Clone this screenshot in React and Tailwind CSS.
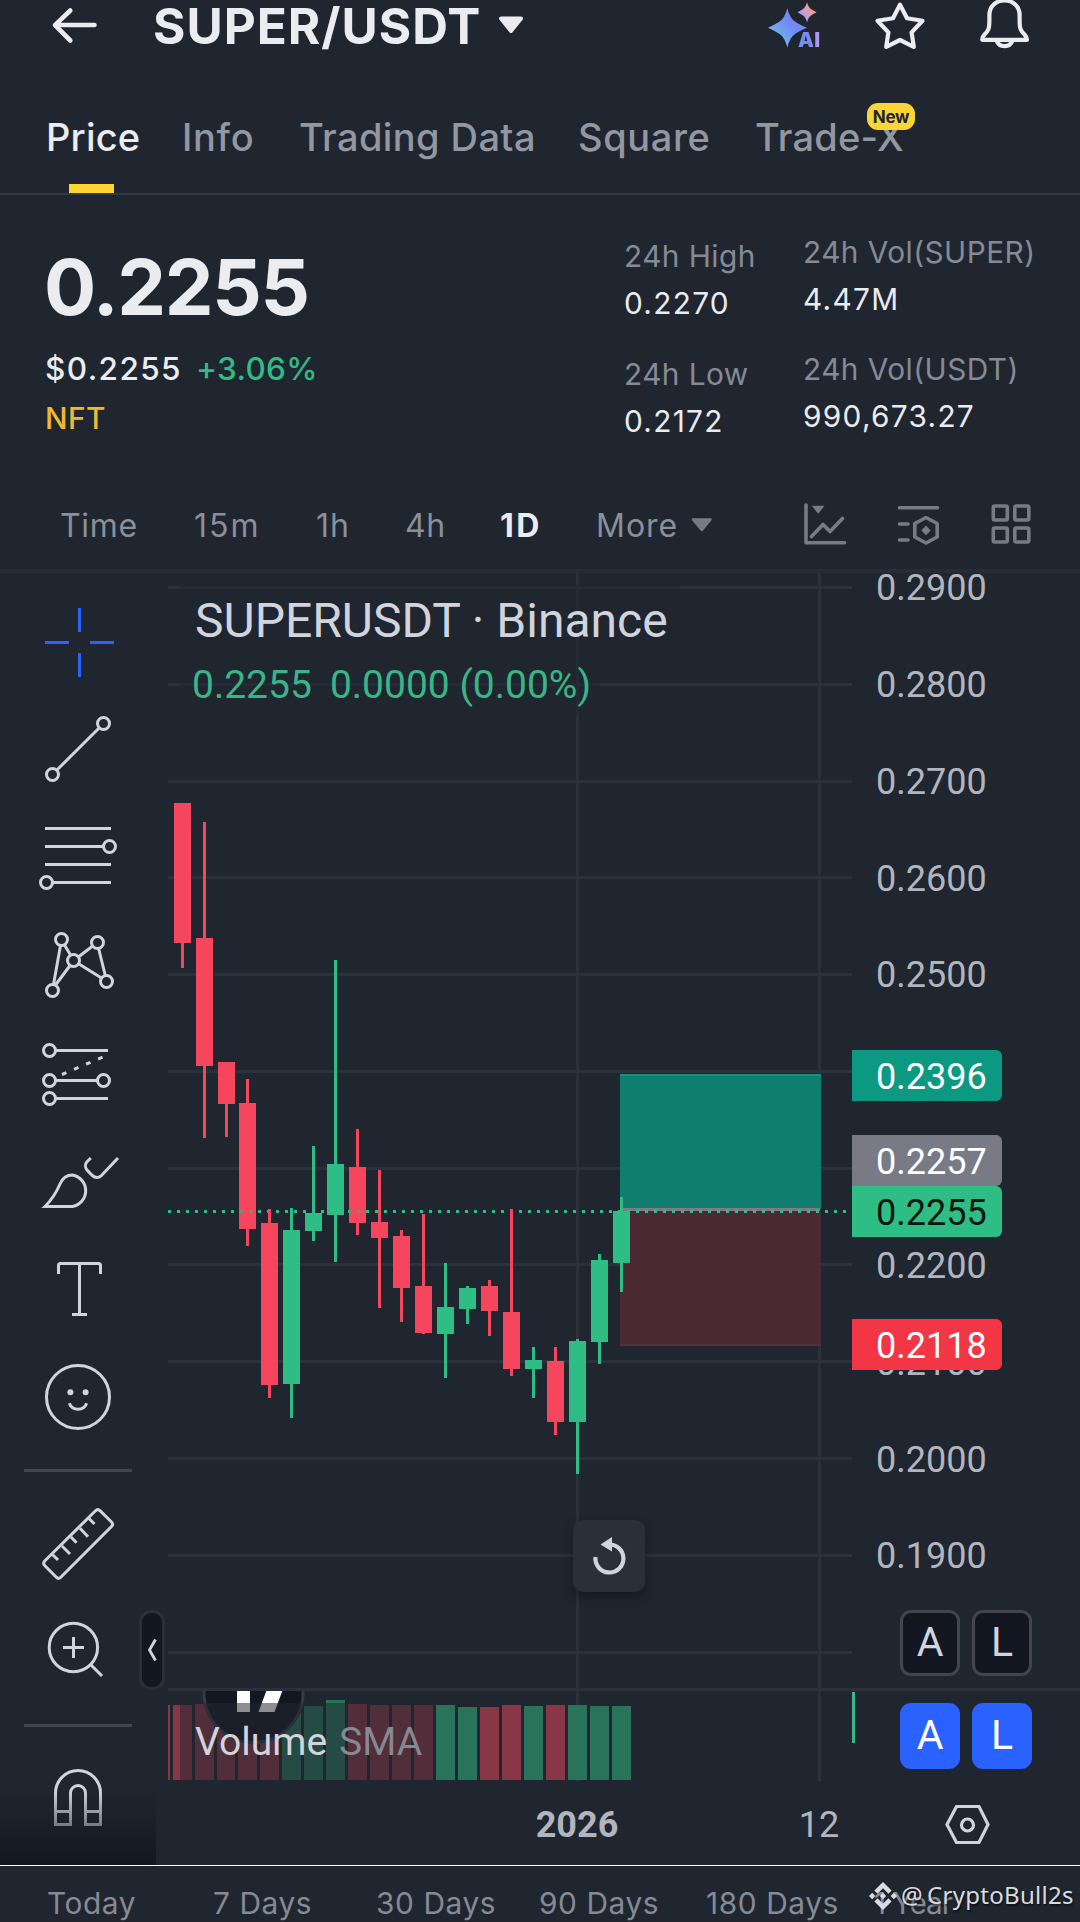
import React from 'react';
import { SiBinance } from 'react-icons/si';

const UP = '#2ebd85';
const DOWN = '#f6465d';

/* [centre x, high, body top, body bottom, low, rising] */
const CANDLES = [
  [182.5, 803, 803, 943, 968, 0],
  [204.5, 822, 938, 1066, 1138, 0],
  [226.5, 1062, 1062, 1104, 1137, 0],
  [247.5, 1079, 1103, 1229, 1246, 0],
  [269.5, 1209, 1223, 1385, 1398, 0],
  [291.5, 1208, 1230, 1384, 1418, 1],
  [313.5, 1146, 1213, 1231, 1241, 1],
  [335.5, 960, 1164, 1215, 1262, 1],
  [357.5, 1129, 1167, 1223, 1235, 0],
  [379.5, 1170, 1222, 1238, 1308, 0],
  [401.5, 1230, 1236, 1288, 1322, 0],
  [423.5, 1214, 1286, 1333, 1334, 0],
  [445.5, 1263, 1307, 1334, 1378, 1],
  [467.5, 1286, 1288, 1309, 1324, 1],
  [489.5, 1280, 1286, 1311, 1336, 0],
  [511.5, 1209, 1312, 1369, 1376, 0],
  [533.5, 1347, 1360, 1369, 1398, 1],
  [555.5, 1347, 1361, 1422, 1435, 0],
  [577.5, 1339, 1341, 1422, 1474, 1],
  [599.5, 1254, 1260, 1342, 1364, 1],
  [621.5, 1197, 1211, 1263, 1292, 1],
];

/* [left, top, width, rising] */
const VOLUMES = [
  [168, 1705, 2, 0],
  [173, 1705, 19, 0],
  [195, 1704, 19, 0],
  [217, 1705, 18, 0],
  [238, 1705, 19, 0],
  [260, 1705, 19, 0],
  [282, 1705, 19, 1],
  [304, 1706, 19, 1],
  [326, 1700, 19, 1],
  [348, 1704, 19, 0],
  [370, 1705, 19, 0],
  [392, 1705, 19, 0],
  [414, 1705, 19, 0],
  [436, 1705, 19, 1],
  [458, 1707, 19, 1],
  [480, 1707, 19, 0],
  [502, 1705, 19, 0],
  [524, 1706, 19, 1],
  [546, 1705, 19, 0],
  [568, 1705, 19, 1],
  [590, 1706, 19, 1],
  [612, 1706, 19, 1],
];

const GRID_Y = [587.5, 684.5, 781.5, 877.5, 974.5, 1071.5, 1168.5, 1264.5, 1361.5, 1458.5, 1555.5, 1652.5];
const PRICES = ['0.2900', '0.2800', '0.2700', '0.2600', '0.2500', '0.2400', '0.2300', '0.2200', '0.2100', '0.2000', '0.1900'];

function Header() {
  return (
    <header className="flex h-[52px] w-full shrink-0 items-center text-[#eaecf0]">
      <svg className="ml-[48px] h-[52px] w-[54px] shrink-0" viewBox="48 0 54 52" fill="none" stroke="#eaecf0" strokeWidth="4.6" strokeLinecap="round" strokeLinejoin="round">
        <path d="M70.3 10.5L55 25.2L70.3 40.5M56 25H94.5" />
      </svg>
      <h1 className="ml-[51px] w-[335px] shrink-0 whitespace-nowrap text-[49.5px] font-bold leading-[52px] tracking-[1px]">SUPER/USDT</h1>
      <svg className="ml-[8px] h-[52px] w-[32px] shrink-0" viewBox="496 0 32 52">
        <path d="M501 18.5H521L511 31Z" fill="#eaecf0" stroke="#eaecf0" strokeWidth="4" strokeLinejoin="round" />
      </svg>
      <div className="relative ml-[238px] h-[52px] w-[64px] shrink-0">
        <svg className="h-[52px] w-[64px]" viewBox="766 0 64 52">
          <defs>
            <linearGradient id="sparkBig" x1="0" y1="1" x2="1" y2="0">
              <stop offset="0.2" stopColor="#6fb6f0" />
              <stop offset="0.6" stopColor="#7189f2" />
              <stop offset="1" stopColor="#7a86f5" />
            </linearGradient>
            <linearGradient id="sparkSmall" x1="0" y1="1" x2="1" y2="0">
              <stop offset="0.2" stopColor="#a79af0" />
              <stop offset="0.5" stopColor="#cf9fce" />
              <stop offset="0.7" stopColor="#f59a80" />
            </linearGradient>
          </defs>
          <path d="M787.3 8.3Q790 18.5 795 21.5Q799 24.5 807 27.8Q799 31 795 34Q790 37 787.3 47.5Q784.6 37 779.6 34Q775 31 768 27.8Q775 24.5 779.6 21.5Q784.6 18.5 787.3 8.3Z" fill="url(#sparkBig)" />
          <path d="M807 2.3Q808.5 7.5 811 9Q813 10.6 816.6 12.3Q813 14 811 15.6Q808.5 17 807 22.4Q805.5 17 803 15.6Q801 14 797.5 12.3Q801 10.6 803 9Q805.5 7.5 807 2.3Z" fill="url(#sparkSmall)" />
        </svg>
        <span className="absolute left-[32px] top-[28px] bg-linear-to-r from-[#6f97f2] via-[#7a86f3] to-[#b9a0ec] bg-clip-text text-[20px] font-black leading-[24px] tracking-[0.3px] text-transparent">AI</span>
      </div>
      <svg className="ml-[43px] h-[52px] w-[56px] shrink-0" viewBox="873 0 56 52" fill="none" stroke="#eaecf0" strokeWidth="4.2" strokeLinejoin="round">
        <path d="M900 4.6L907 18.3L922.5 20.8L911.6 32.4L913.8 46.8L900 40L886.2 46.8L888.4 32.4L877.5 20.8L893 18.3Z" />
      </svg>
      <svg className="ml-[48px] h-[53px] w-[56px] shrink-0" viewBox="977 0 56 53" fill="none" stroke="#eaecf0" strokeWidth="4.2" strokeLinejoin="round">
        <path d="M1004.500 0.500C996 .5 989.400 6.500 989.400 15V20C989.400 29 988.500 30.500 984.500 34.500C982.500 36.500 982.200 37.500 982.200 39.800H1027C1027 37.500 1026.500 36.500 1024.500 34.500C1020.500 30.500 1019.600 29 1019.600 20V15C1019.600 6.500 1013 .5 1004.500 .5ZM996.500 40.500A8.500 8.500 0 0 0 1012.500 40.500" />
      </svg>
    </header>
  );
}

function Tabs() {
  return (
    <nav className="relative flex h-[143px] w-full shrink-0 whitespace-nowrap border-b-2 border-[#333a44] pl-[46px] pt-[60px] text-[38px] font-medium leading-[50px] text-[#9297a2]">
      <div className="w-[136px] tracking-[0.2px] text-[#eaecf0]">Price</div>
      <div className="w-[117px] tracking-[0.7px]">Info</div>
      <div className="w-[279px] tracking-[0.4px]">Trading Data</div>
      <div className="w-[177px] tracking-[0.6px]">Square</div>
      <div className="relative tracking-[0.2px]">
        Trade-X
        <span className="absolute left-[112px] top-[-9px] h-[27px] w-[48px] rounded-[11px] bg-[#fcd535] text-center text-[17px] font-bold leading-[28px] tracking-[-0.3px] text-[#202630]">New</span>
      </div>
      <span className="absolute bottom-0 left-[69px] h-[9px] w-[45px] bg-[#fcd535]" />
    </nav>
  );
}

function Stat({ label, value }) {
  return (
    <div className="whitespace-nowrap text-[29.8px] leading-[46.500px]">
      <div className="tracking-[0.450px] text-[#858a95]">{label}</div>
      <div className="tracking-[1.3px] text-[#eaecf0]">{value}</div>
    </div>
  );
}

function Summary() {
  return (
    <section className="flex h-[286px] w-full shrink-0">
      <div className="w-[580px] pl-[44px] pt-[52px]">
        <div className="text-[77.5px] font-bold leading-[80px] tracking-[-1.300px] text-[#eaecf0]">0.2255</div>
        <div className="mt-[22px] flex text-[31.500px] leading-[40px]">
          <span className="w-[152px] pl-px font-medium tracking-[1.4px] text-[#eaecf0]">$0.2255</span>
          <span className="font-medium tracking-[0.3px] text-[#2ebd85]">+3.06%</span>
        </div>
        <div className="mt-[9px] pl-px text-[29.8px] font-medium leading-[40px] tracking-[0.500px] text-[#f0b92b]">NFT</div>
      </div>
      <div className="flex w-[180px] flex-col gap-[25px] pl-[44px] pt-[38px]">
        <Stat label="24h High" value="0.2270" />
        <Stat label="24h Low" value="0.2172" />
      </div>
      <div className="flex flex-col gap-[24px] pl-[43px] pt-[34px]">
        <Stat label="24h Vol(SUPER)" value="4.47M" />
        <Stat label="24h Vol(USDT)" value="990,673.27" />
      </div>
    </section>
  );
}

function Intervals() {
  return (
    <div className="flex h-[92px] w-full shrink-0 items-center whitespace-nowrap border-b-4 border-[#272d37] pl-[60px] text-[32px] leading-[40px] text-[#8a8f9a]">
      <div className="w-[134px] pt-[2px] tracking-[0.7px]">Time</div>
      <div className="w-[122px] pt-[2px] tracking-[2px]">15m</div>
      <div className="w-[89px] pt-[2px] tracking-[1px]">1h</div>
      <div className="w-[95px] pt-[2px] tracking-[0.500px]">4h</div>
      <div className="w-[96px] pt-[2px] font-bold tracking-[2.500px] text-[#eaecf0]">1D</div>
      <div className="w-[92px] pt-[2px] tracking-[1px]">More</div>
      <svg className="h-[24px] w-[28px]" viewBox="688 512 28 24">
        <path d="M693 518.500H710.500L701.800 529Z" fill="#767b86" stroke="#767b86" strokeWidth="2.500" strokeLinejoin="round" />
      </svg>
      <svg className="ml-[84px] h-[48px] w-[50px]" viewBox="800 501 50 48" fill="none" stroke="#767b86" strokeWidth="3.600" strokeLinecap="round" strokeLinejoin="round">
        <path d="M806 505V542.800H844.500M811.500 536.500L823 524.500L830 531.500L842.500 518.500" />
        <path d="M811.700 505.700H824.500L818.200 513.700Z" fill="#767b86" stroke="none" />
      </svg>
      <svg className="ml-[43px] h-[48px] w-[50px]" viewBox="893 501 50 48" fill="none" stroke="#767b86" strokeWidth="3.600" strokeLinecap="round" strokeLinejoin="round">
        <path d="M899.500 507.700H937.500M899.500 524H908M899.500 540H908M926 517.500L937.200 523.500V537L926 543L914.800 537V523.500Z" />
        <path d="M926 525.500L930.700 530.400L926 535.300L921.300 530.400Z" fill="#767b86" stroke="none" />
      </svg>
      <svg className="ml-[43px] h-[48px] w-[50px]" viewBox="986 501 50 48" fill="none" stroke="#767b86" strokeWidth="3.600">
        <rect x="993.300" y="506" width="14" height="14" rx="1.500" />
        <rect x="1014.800" y="506" width="14" height="14" rx="1.500" />
        <rect x="993.300" y="528" width="14" height="14" rx="1.500" />
        <rect x="1014.800" y="528" width="14" height="14" rx="1.500" />
      </svg>
    </div>
  );
}

function Tool({ top, className, color = '#d1d4dc', height, children }) {
  return (
    <svg className={className} viewBox={`0 ${top} 156 ${height}`} fill="none" stroke={color} strokeWidth="3">
      {children}
    </svg>
  );
}

function ToolRail() {
  return (
    <aside className="relative flex h-full w-[168px] shrink-0 flex-col">
      <Tool top={573} height={123} className="h-[123px] w-[156px] shrink-0" color="#2962ff">
        <path d="M79.500 608V632M79.500 653V677M45 642.500H69M90 642.500H114" />
      </Tool>
      <Tool top={696} height={107} className="h-[107px] w-[156px] shrink-0">
        <circle cx="103.500" cy="723.500" r="6" />
        <circle cx="52.500" cy="774.500" r="6" />
        <path d="M56.700 770.300L99.300 727.700" />
      </Tool>
      <Tool top={803} height={108} className="h-[108px] w-[156px] shrink-0">
        <path d="M45 828.500H111M45 846.500H103.500M45 864.500H111M52.500 882.500H111" />
        <circle cx="109.500" cy="846.500" r="6" />
        <circle cx="46.500" cy="882.500" r="6" />
      </Tool>
      <Tool top={911} height={109} className="h-[109px] w-[156px] shrink-0">
        <circle cx="61.500" cy="939.500" r="6" />
        <circle cx="97.500" cy="942.500" r="6" />
        <circle cx="73.500" cy="960.500" r="6" />
        <circle cx="106.500" cy="981.500" r="6" />
        <circle cx="52.500" cy="990.500" r="6" />
        <path d="M60.500 945.500L53.500 984.500M64.500 945L70.500 955M70 965.500L55.500 985M78.300 957L92.700 946M98.600 948.500L105.300 975.500M78.600 963.800L101.500 978" />
      </Tool>
      <Tool top={1020} height={109} className="h-[109px] w-[156px] shrink-0">
        <circle cx="49.500" cy="1050.500" r="6" />
        <circle cx="49.500" cy="1080.500" r="6" />
        <circle cx="103.500" cy="1080.500" r="6" />
        <circle cx="49.500" cy="1098.500" r="6" />
        <path d="M55.500 1050.500H108M55.500 1080.500H97.500M55.500 1098.500H108" />
        <path d="M62 1074.500L104 1056.500" strokeDasharray="4.800 8.300" />
      </Tool>
      <Tool top={1129} height={107} className="h-[107px] w-[156px] shrink-0">
        <path d="M45 1206.500C53 1198.500 57 1191 60 1184C62.500 1178 67 1175 72.500 1175A16 16 0 0 1 72.500 1206.500Z" />
        <path d="M90.800 1158L87 1161.800C85 1164 85 1167.500 86.800 1169.700C88.500 1171.700 91 1174.200 92.500 1175.600C95 1178.200 98.700 1178.200 101.200 1175.700L118 1158" />
      </Tool>
      <Tool top={1236} height={107} className="h-[107px] w-[156px] shrink-0">
        <path d="M58.500 1274V1265.500Q58.500 1263.500 60.500 1263.500H98.500Q100.500 1263.500 100.500 1265.500V1274M79.500 1263.500V1314.500M72 1314.500H87" />
      </Tool>
      <Tool top={1343} height={108} className="h-[108px] w-[156px] shrink-0">
        <circle cx="78" cy="1397" r="31.500" />
        <circle cx="70.400" cy="1392.300" r="3" fill="#d1d4dc" stroke="none" />
        <circle cx="85.600" cy="1392.300" r="3" fill="#d1d4dc" stroke="none" />
        <path d="M69.300 1403.300A9.300 9.300 0 0 0 86.700 1403.300" />
      </Tool>
      <div className="mb-[18px] ml-[24px] mt-[18px] h-[3px] w-[108px] shrink-0 bg-[#434651]" />
      <Tool top={1490} height={108} className="h-[108px] w-[156px] shrink-0">
        <path d="M95.500 1510.700Q97.700 1508.500 100 1510.700L111.500 1522Q113.700 1524.300 111.500 1526.500L60.500 1577.500Q58.500 1579.300 56.300 1577.200L44.700 1565.500Q42.600 1563.300 44.700 1561Z" strokeLinejoin="round" />
        <path d="M52.700 1554.700L58 1560M62 1546L70 1554M71 1537L76.500 1542.700M80 1528.300L88 1536.700M89 1518.500L94.500 1524" />
      </Tool>
      <Tool top={1598} height={100} className="h-[100px] w-[156px] shrink-0">
        <circle cx="73.400" cy="1647.500" r="24.200" />
        <path d="M63 1647.500H84M73.500 1637V1658M90.800 1664.800L102 1676" />
      </Tool>
      <div className="mb-[13px] ml-[24px] mt-[26px] h-[3px] w-[108px] shrink-0 bg-[#434651]" />
      <Tool top={1740} height={125} className="h-[125px] w-[156px] shrink-0">
        <path d="M55.500 1824.500V1793A22.500 22.500 0 0 1 100.500 1793V1824.500H85.500V1793A7.500 7.500 0 0 0 70.500 1793V1824.500ZM55.500 1811.500H70.500M85.500 1811.500H100.500" />
      </Tool>
      <div className="absolute bottom-0 left-0 h-[75px] w-[156px] bg-linear-to-b from-transparent to-[#131722]" />
      <div className="absolute left-[139px] top-[1037px] flex h-[80px] w-[26px] items-center justify-center rounded-[12px] border-[3px] border-[#2a2f39] bg-[#131722]">
        <svg className="mr-px h-[24px] w-[12px]" viewBox="0 0 12 24" fill="none" stroke="#d1d4dc" strokeWidth="2.800">
          <path d="M9.500 1.500L3.500 12L9.500 22.500" />
        </svg>
      </div>
    </aside>
  );
}

function Plot() {
  return (
    <div className="relative h-full w-[684px] shrink-0">
      <svg className="h-[1292px] w-[684px]" viewBox="168 573 684 1292" shapeRendering="crispEdges">
        {GRID_Y.map((y) => (
          <rect key={y} x="168" y={y - 1.5} width="684" height="3" fill="#2b313b" />
        ))}
        <rect x="576" y="573" width="3" height="1208" fill="#2b313b" />
        <rect x="818" y="573" width="3" height="1208" fill="#2b313b" />
        <rect x="168" y="1688" width="684" height="3" fill="#2b303b" />
        <rect x="180" y="585" width="500" height="70" fill="#202630" fillOpacity="0.5" />
        <rect x="180" y="655" width="420" height="60" fill="#202630" fillOpacity="0.5" />

        <rect x="620" y="1074" width="201" height="135" fill="#0f7e6e" />
        <rect x="620" y="1074" width="201" height="2" fill="#15907c" />
        <rect x="620" y="1211" width="201" height="135" fill="#4a2933" />
        <rect x="620" y="1344" width="201" height="2" fill="#54303a" />
        <rect x="622" y="1208" width="198" height="3" fill="#7d7c86" />
        <path d="M168 1211.500H850" stroke={UP} strokeWidth="3" strokeDasharray="3 6" />

        {CANDLES.map(([x, high, top, bottom, low, up]) => (
          <g key={x} fill={up ? UP : DOWN}>
            <rect x={x - 1.5} y={high} width="3" height={low - high} />
            <rect x={x - 8.5} y={top} width="17" height={bottom - top} />
          </g>
        ))}
        <path d="M240 1211.500H255M348 1211.500H365" stroke={UP} strokeWidth="3" strokeDasharray="3 6" opacity="0.6" />

        {VOLUMES.map(([x, top, w, up]) => (
          <rect key={x} x={x} y={top} width={w} height={1780 - top} fill={up ? '#28735a' : '#893646'} />
        ))}
        <clipPath id="volumePane">
          <rect x="168" y="1691" width="684" height="174" />
        </clipPath>
        <g clipPath="url(#volumePane)">
          <circle cx="253.500" cy="1693" r="49.500" fill="#131722" stroke="#363a45" strokeWidth="3" shapeRendering="auto" />
          <path d="M237 1685H249.500V1712H237Z" fill="#fff" />
          <path d="M268.500 1685H284.500L274.500 1712H258.500Z" fill="#fff" shapeRendering="auto" />
        </g>
        <rect x="180" y="1703" width="253" height="78" fill="#202630" fillOpacity="0.52" />
      </svg>

      <div className="absolute left-[27px] top-[18px] whitespace-nowrap font-[Roboto] text-[48px] leading-[60px] text-[#d1d4dc]">SUPERUSDT · Binance</div>
      <div className="absolute left-[24px] top-[92px] flex gap-[18px] whitespace-nowrap font-[Roboto] text-[39px] leading-[40px] text-[#3bb587]">
        <span>0.2255</span>
        <span>0.0000 (0.00%)</span>
      </div>
      <div className="absolute left-[27px] top-[1149px] flex gap-[12px] whitespace-nowrap font-[Roboto] text-[39px] leading-[40px] text-[#d1d4dc]">
        <span>Volume</span>
        <span className="text-[#868993]">SMA</span>
      </div>

      <div className="absolute left-[405px] top-[947px] flex h-[72px] w-[72px] items-center justify-center rounded-[10px] bg-[#2a2f3a] shadow-[0_6px_10px_rgba(16,18,28,0.6)]">
        <svg className="h-[44px] w-[40px]" viewBox="589 1535 40 44" fill="none">
          <path d="M595.500 1558A14 14 0 1 0 609 1545.500H606" stroke="#d1d4dc" strokeWidth="4.200" />
          <path d="M600.500 1545.500L612 1538V1552.500Z" fill="#d1d4dc" />
        </svg>
      </div>

      <div className="absolute left-[359px] top-[1231px] w-[100px] text-center font-[Roboto] text-[36px] font-bold leading-[42px] text-[#b2b5be]">2026</div>
      <div className="absolute left-[601px] top-[1231px] w-[100px] text-center font-[Roboto] text-[36px] leading-[42px] text-[#b2b5be]">12</div>
    </div>
  );
}

const TAG = 'absolute left-0 h-[51px] w-[150px] rounded-r-[6px] pl-[24px] leading-[54px]';
const KEY = 'flex h-[66px] w-[60px] items-center justify-center rounded-[11px] pb-[3px]';

function PriceAxis() {
  return (
    <div className="relative h-full w-[228px] shrink-0 font-[Roboto] text-[36px] text-[#b2b5be]">
      <div className="mt-[-33px] flex flex-col pl-[24px]">
        {PRICES.map((p) => (
          <div key={p} className="h-[96.850px] leading-[96.850px]">{p}</div>
        ))}
      </div>
      <div className={`${TAG} top-[477px] bg-[#0b9981] text-white`}>0.2396</div>
      <div className={`${TAG} top-[562px] bg-[#787b86] text-white`}>0.2257</div>
      <div className={`${TAG} top-[613px] bg-[#2ebd85] text-[#06170f]`}>0.2255</div>
      <div className={`${TAG} top-[746px] bg-[#f23645] text-white`}>0.2118</div>
      <div className="absolute left-0 top-[1115px] h-[3px] w-full bg-[#2b303b]" />
      <div className="absolute left-0 top-[1119px] h-[51px] w-[3px] bg-[#3bb587]" />
      <div className="absolute left-[48px] top-[1037px] grid grid-cols-2 gap-x-[12px] gap-y-[27px] text-[41px] leading-[48px]">
        <div className={`${KEY} border-[3px] border-[#434651] bg-[#131722] text-[#d1d4dc]`}>A</div>
        <div className={`${KEY} border-[3px] border-[#434651] bg-[#131722] text-[#d1d4dc]`}>L</div>
        <div className={`${KEY} bg-[#2962ff] text-white`}>A</div>
        <div className={`${KEY} bg-[#2962ff] text-white`}>L</div>
      </div>
      <svg className="absolute left-[88px] top-[1227px] h-[50px] w-[54px]" viewBox="940 1800 54 50" fill="none" stroke="#d1d4dc" strokeWidth="3.200">
        <path d="M956.500 1806.500H979L988 1824.500L979 1842.500H956.500L947 1824.500Z" />
        <circle cx="967.500" cy="1825" r="6" />
      </svg>
    </div>
  );
}

function RangeBar() {
  return (
    <footer className="relative flex h-[57px] w-full shrink-0 whitespace-nowrap border-t border-white pl-[47px] text-[29.800px] leading-[74px] tracking-[0.600px] text-[#858a95]">
      <div className="w-[166px]">Today</div>
      <div className="w-[163px]">7 Days</div>
      <div className="w-[163px]">30 Days</div>
      <div className="w-[167px]">90 Days</div>
      <div className="w-[168px]">180 Days</div>
      <div className="tracking-[-1px]">1 Year</div>
      <div className="absolute left-[869px] top-[14px] flex items-center font-['Noto_Sans'] text-[24px] leading-[30px] text-[#d9dbe0] [text-shadow:1px_2px_2px_rgba(0,0,0,0.6)]">
        <SiBinance className="mt-[2px] h-[28px] w-[28px]" />
        <span className="ml-[4px] w-[26px] tracking-normal">@</span>
        <span className="tracking-[0.300px]">CryptoBull2s</span>
      </div>
    </footer>
  );
}

export default function App() {
  return (
    <div className="flex h-[1922px] w-[1080px] flex-col overflow-hidden bg-[#202630] font-[Inter,sans-serif]">
      <Header />
      <Tabs />
      <Summary />
      <Intervals />
      <main className="flex h-[1292px] w-full shrink-0">
        <ToolRail />
        <Plot />
        <PriceAxis />
      </main>
      <RangeBar />
    </div>
  );
}
